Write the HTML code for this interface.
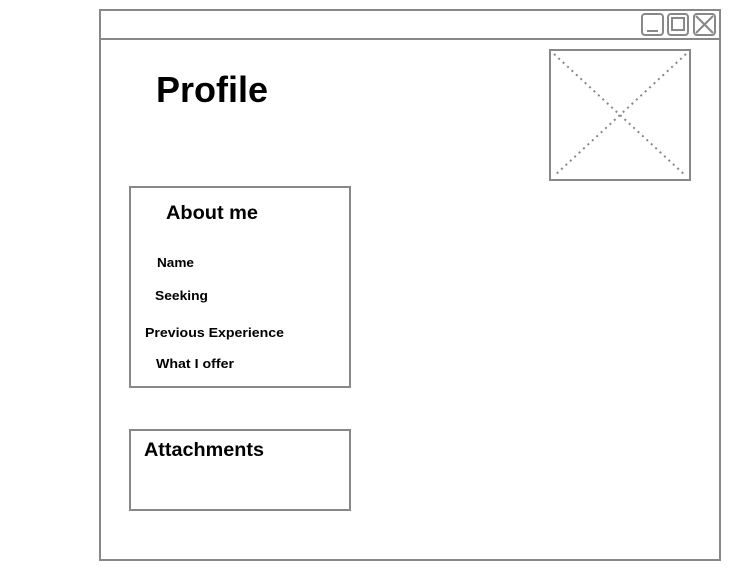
<!DOCTYPE html>
<html><head><meta charset="utf-8"><style>
html,body{margin:0;padding:0;background:#fff;}
svg{display:block;}
text{font-family:"Liberation Sans",Arial,sans-serif;font-weight:bold;fill:#000;}
</style></head><body>
<svg width="740" height="580" viewBox="0 0 740 580" xmlns="http://www.w3.org/2000/svg">
<g fill="none" stroke="#888" stroke-width="2">
<rect x="100" y="10" width="620" height="550"/>
<line x1="100" y1="39" x2="720" y2="39"/>
<rect x="642" y="14" width="21" height="21" rx="3"/>
<line x1="647" y1="31" x2="658" y2="31"/>
<rect x="668" y="14" width="20" height="21" rx="3"/>
<rect x="672" y="18" width="12" height="12"/>
<rect x="694" y="14" width="21" height="21" rx="3"/>
<line x1="696" y1="16" x2="713" y2="33"/>
<line x1="713" y1="16" x2="696" y2="33"/>
<rect x="550" y="50" width="140" height="130"/>
<rect x="130" y="187" width="220" height="200"/>
<rect x="130" y="430" width="220" height="80"/>
</g>
<g stroke="#888" stroke-width="2" stroke-dasharray="2,4">
<line x1="554" y1="54" x2="686" y2="176"/>
<line x1="686" y1="54" x2="554" y2="176"/>
</g>
<text x="156" y="102" font-size="36">Profile</text>
<text x="166" y="219" font-size="19" textLength="92" lengthAdjust="spacingAndGlyphs">About me</text>
<text x="157" y="267" font-size="13" textLength="37" lengthAdjust="spacingAndGlyphs">Name</text>
<text x="155" y="300" font-size="13" textLength="53" lengthAdjust="spacingAndGlyphs">Seeking</text>
<text x="145" y="337" font-size="13" textLength="139" lengthAdjust="spacingAndGlyphs">Previous Experience</text>
<text x="156" y="368" font-size="13" textLength="78" lengthAdjust="spacingAndGlyphs">What I offer</text>
<text x="144" y="456" font-size="19" textLength="120" lengthAdjust="spacingAndGlyphs">Attachments</text>
</svg>
</body></html>
